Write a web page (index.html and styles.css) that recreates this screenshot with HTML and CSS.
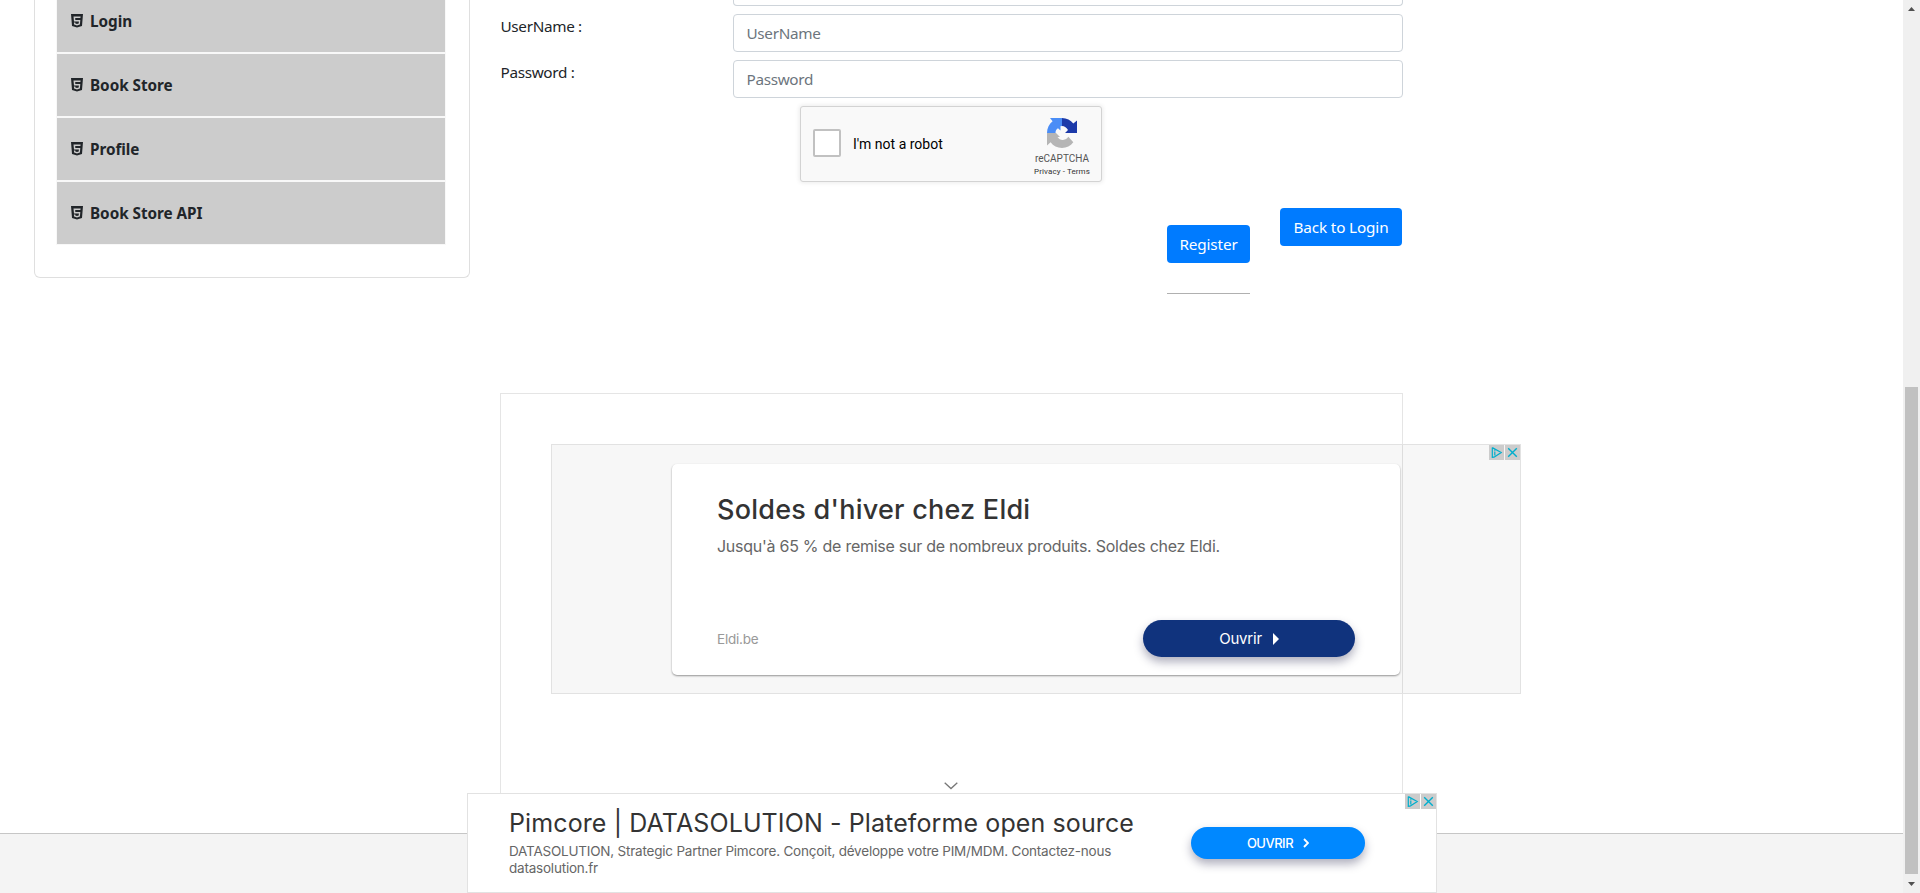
FILE: index.html
```
<!DOCTYPE html>
<html lang="en">
<head>
<meta charset="utf-8">
<title>Register</title>
<link rel="stylesheet" href="styles.css">
</head>
<body>
<svg class="defs" width="0" height="0">
  <symbol id="html5" viewBox="0 0 12 14">
    <path fill="#212529" fill-rule="evenodd" d="M0 0H12L11 11.9L6 13.6L1 11.9ZM2.5 2.5L3 7.4H7.9L7.7 9.4L6 9.9L4.4 9.4L4.3 8.4H2.9L3.1 10.5L6 11.4L8.9 10.5L9.3 6H4.3L4.2 4H9.4L9.6 2.5Z"/>
  </symbol>
  <symbol id="adinfo" viewBox="0 0 15 15">
    <path d="M3.3 2.6V12.4L5 12.2M3.3 2.6L12.2 7.5L5 12.2M5.8 6.4V10.4M5.8 4.7V5.7" fill="none" stroke="#00aecd" stroke-width="1.2"/>
  </symbol>
  <symbol id="adclose" viewBox="0 0 15 15">
    <path d="M3.2 3.2L11.8 11.8M11.8 3.2L3.2 11.8" fill="none" stroke="#00aecd" stroke-width="1.4"/>
  </symbol>
</svg>
<div class="page">
  <div class="content">
    <nav class="side">
      <ul class="menu">
        <li class="item"><svg class="ico"><use href="#html5"/></svg><span>Login</span></li>
        <li class="item"><svg class="ico"><use href="#html5"/></svg><span>Book Store</span></li>
        <li class="item"><svg class="ico"><use href="#html5"/></svg><span>Profile</span></li>
        <li class="item"><svg class="ico"><use href="#html5"/></svg><span>Book Store API</span></li>
      </ul>
    </nav>
    <main class="main">
      <div class="field cut"></div>
      <div class="row"><label class="label">UserName :</label><div class="field">UserName</div></div>
      <div class="row"><label class="label">Password :</label><div class="field">Password</div></div>
      <div class="captcha">
        <div class="check"></div>
        <div class="robot">I'm not a robot</div>
        <div class="brand">
          <svg class="logo" viewBox="0 0 30 30">
            <path fill="#4a8df6" d="M15 0H3L5.6 3.3C2.2 6 0 10.200 0 15H8.500C8.500 12.500 9.500 11 11 10.200L13.500 12.500V8.200L15 8Z"/>
            <path fill="#1c3aa9" d="M15 0C19.900 0 23.600 2.200 26.300 5.600L30 2.500V15H18L21 12C19.900 10 17.500 8 15 8Z"/>
            <path fill="#b5b5b5" d="M0 15H9L13 19H10.500C12 21.300 14 22.200 16 22C18.500 21.800 20 20.400 21.400 18.800L26.300 24.300C23.600 28 19.500 30 15 30C10.200 30 6.300 28 3.600 24.300L0 27.500Z"/>
          </svg>
          <span class="cap">reCAPTCHA</span>
          <span class="terms">Privacy - Terms</span>
        </div>
      </div>
      <div class="actions">
        <div class="reg"><button class="btn b1">Register</button><hr class="rule"></div>
        <button class="btn b2">Back to Login</button>
      </div>
      <div class="adbox">
        <div class="ad">
          <div class="card">
            <div class="head">Soldes d'hiver chez Eldi</div>
            <div class="desc">Jusqu'à 65 % de remise sur de nombreux produits. Soldes chez Eldi.</div>
            <div class="foot">
              <span class="site">Eldi.be</span>
              <div class="cta"><span>Ouvrir</span><svg width="6" height="12" viewBox="0 0 6 12"><path fill="#fff" d="M0 0L6 6L0 12Z"/></svg></div>
            </div>
          </div>
          <div class="marks"><svg class="mark"><use href="#adinfo"/></svg><svg class="mark"><use href="#adclose"/></svg></div>
        </div>
      </div>
    </main>
  </div>
  <footer class="footer"></footer>
  <div class="anchor">
    <svg class="fold" viewBox="0 0 14 8"><path d="M.7 .7L7 6.500L13.300 .7" fill="none" stroke="#777" stroke-width="1.300"/></svg>
    <div class="copy">
      <div class="head2">Pimcore | DATASOLUTION - Plateforme open source</div>
      <div class="desc2">DATASOLUTION, Strategic Partner Pimcore. Conçoit, développe votre PIM/MDM. Contactez-nous<br>datasolution.fr</div>
    </div>
    <div class="cta2"><span>OUVRIR</span><svg width="6" height="10" viewBox="0 0 6 10"><path d="M1 1L5 5L1 9" fill="none" stroke="#fff" stroke-width="1.900"/></svg></div>
    <div class="marks"><svg class="mark"><use href="#adinfo"/></svg><svg class="mark"><use href="#adclose"/></svg></div>
  </div>
</div>
<div class="bar">
  <svg width="7" height="4" viewBox="0 0 7 4"><path fill="#505050" d="M0 4L3.500 0L7 4Z"/></svg>
  <div class="thumb"></div>
  <svg width="7" height="4" viewBox="0 0 7 4"><path fill="#505050" d="M0 0L3.500 4L7 0Z"/></svg>
</div>
</body>
</html>
```
FILE: styles.css
```
* { box-sizing: border-box; }
body { margin: 0; height: 893px; overflow: hidden; display: flex; background: #fff; color: #212529; font: 15.3px/24px "Noto Sans", sans-serif; letter-spacing: -.33px; }
.defs { position: absolute; }
.page { position: relative; width: 1903px; height: 893px; display: flex; flex-direction: column; }
.content { height: 833px; display: flex; align-items: flex-start; padding-left: 34px; }
.side { width: 436px; height: 278px; border: 1px solid #dfdfdf; border-top: 0; border-radius: 0 0 6px 6px; padding: 0 23px 0 22px; }
.menu { list-style: none; margin: 0; padding: 0; display: flex; flex-direction: column; gap: 2px; background: #f8f8f8; box-shadow: 0 0 0 1px #f8f8f8; width: 388px; }
.item { height: 62px; background: #ccc; display: flex; align-items: center; gap: 7px; padding: 0 0 0 14px; font-weight: 700; letter-spacing: -.05px; }
.item:first-child { height: 52px; padding-bottom: 10px; }
.ico { width: 12px; height: 14px; }
.main { margin-left: 30px; width: 903px; display: flex; flex-direction: column; }
.row { display: flex; height: 38px; margin-bottom: 8px; }
.label { width: 233px; padding-left: .5px; }
.field { width: 670px; height: 38px; border: 1px solid #ced4da; border-radius: 4px; padding: 6px 12px 6px 12.5px; color: #6c757d; }
.cut { height: 6px; border-top: 0; border-radius: 0 0 4px 4px; padding: 0; margin: 0 0 8px 233px; }
.captcha { width: 302px; height: 76px; margin-left: 300px; border: 1px solid #d3d3d3; border-radius: 3px; background: #f9f9f9; box-shadow: 0 0 4px 1px rgba(0,0,0,.08); display: flex; align-items: flex-start; padding: 22px 0 0 12px; font-family: Roboto, sans-serif; letter-spacing: 0; color: #000; }
.check { width: 28px; height: 28px; border: 2px solid #c1c1c1; border-radius: 2px; background: #fff; }
.robot { width: 189px; padding: 3px 0 0 12px; font-size: 14px; line-height: 24px; }
.brand { width: 64px; margin-top: -11px; display: flex; flex-direction: column; align-items: center; color: #555; }
.logo { width: 30px; height: 30px; }
.cap { font-size: 10px; line-height: 12px; margin-top: 5px; }
.terms { font-size: 8px; line-height: 10px; margin-top: 2px; letter-spacing: .1px; color: #333; }
.actions { display: flex; justify-content: flex-end; align-items: flex-start; gap: 30px; margin-top: 26px; height: 185px; padding-right: 1px; }
.reg { width: 83px; padding-top: 17px; }
.btn { display: flex; align-items: center; justify-content: center; height: 38px; border: 0; padding: 0; border-radius: 4px; background: #007bff; color: #fff; font: 15.3px/24px "Noto Sans", sans-serif; letter-spacing: -.15px; }
.b1 { width: 83px; }
.b2 { width: 122px; }
.rule { width: 83px; margin: 30px 0 0; border: 0; height: 1px; background: #b0b0b0; }
.adbox { height: 440px; border: 1px solid #e5e5e5; border-bottom: 0; padding: 50px; letter-spacing: 0; }
.ad { position: relative; width: 970px; height: 250px; border: 1px solid #e2e2e2; background: rgba(0,0,0,.032); padding: 19px 0 0 120px; }
.card { width: 728px; height: 211px; border-radius: 5px; background: #fff; box-shadow: 0 1px 2px rgba(0,0,0,.4); padding: 28px 45px 0; font-family: Inter, sans-serif; }
.head { font: 500 27px/36px Inter, sans-serif; letter-spacing: .24px; color: #333; white-space: nowrap; }
.desc { font: 16px/24px Inter, sans-serif; letter-spacing: -.26px; color: #666; white-space: nowrap; margin-top: 6px; }
.foot { display: flex; justify-content: space-between; align-items: center; margin-top: 62px; }
.site { font-size: 13.5px; letter-spacing: -.2px; color: #999; }
.cta { width: 212px; height: 37px; border-radius: 19px; background: #10337d; color: #fff; display: flex; align-items: center; justify-content: center; gap: 11px; box-shadow: 0 5px 10px rgba(30,30,70,.35); font-size: 15px; letter-spacing: -.2px; }
.marks { position: absolute; top: 0; right: 0; display: flex; gap: 1px; }
.mark { width: 15px; height: 15px; background: #ccc; }
.footer { height: 60px; background: #f4f4f4; border-top: 1px solid #c6c6c6; }
.anchor { position: absolute; left: 467px; top: 793px; width: 970px; height: 100px; background: #fff; border: 1px solid #e2e2e2; display: flex; justify-content: space-between; padding: 11px 71px 0 41px; font-family: Inter, sans-serif; letter-spacing: 0; }
.fold { position: absolute; left: 476px; top: -12px; width: 14px; height: 8px; }
.head2 { font: 25px/36px Inter, sans-serif; letter-spacing: .11px; color: #333; white-space: nowrap; }
.desc2 { font: 13.5px/17px Inter, sans-serif; letter-spacing: -.21px; color: #666; white-space: nowrap; margin-top: 2px; }
.cta2 { width: 174px; height: 32px; margin-top: 22px; border-radius: 16px; background: #0088ff; color: #fff; display: flex; align-items: center; justify-content: center; gap: 10px; box-shadow: 0 5px 10px rgba(30,30,70,.35); font-size: 13px; font-weight: 500; letter-spacing: -.5px; }
.bar { width: 17px; height: 893px; background: #f0f0f0; display: flex; flex-direction: column; align-items: center; padding: 7px 0; }
.thumb { width: 13px; height: 487px; margin: 376px 0 8px; background: #c1c1c1; }
```
